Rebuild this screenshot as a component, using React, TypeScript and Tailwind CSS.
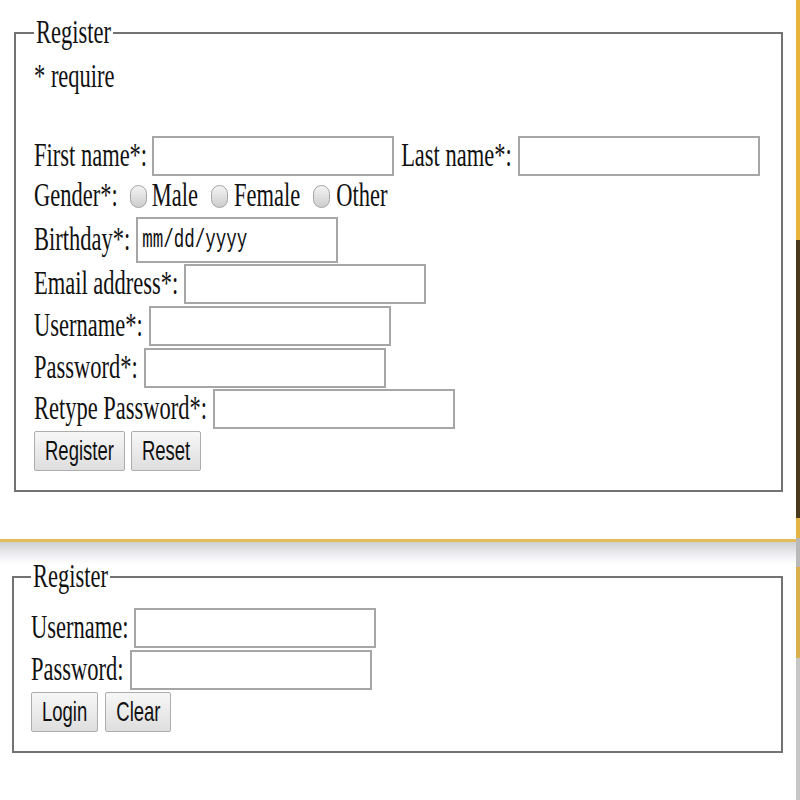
import React from "react";

// text in the reference is stretched vertically, so glyphs get a y-scale
function T({ children, className = "" }: { children: React.ReactNode; className?: string }) {
  return (
    <span className={`inline-block origin-center scale-y-[1.45] whitespace-pre ${className}`}>
      {children}
    </span>
  );
}

function Field({ className = "" }: { className?: string }) {
  return (
    <input
      type="text"
      className={`h-[40px] w-[242px] border-2 border-[#a6a6a6] bg-white outline-none ${className}`}
    />
  );
}

function Radio({ className = "" }: { className?: string }) {
  return (
    <span
      className={`inline-block h-[23px] w-[17px] rounded-full border border-[#a3a3a3] bg-linear-to-b from-[#f4f4f4] to-[#cdcdcd] ${className}`}
    />
  );
}

function Btn({ label, className = "" }: { label: string; className?: string }) {
  return (
    <button
      type="button"
      className={`flex h-[40px] items-center rounded-[2px] border border-[#adadad] bg-linear-to-b from-[#f7f7f7] to-[#dedede] px-[10px] font-['Liberation_Sans',sans-serif] text-[18.5px] leading-[22px] text-[#111] ${className}`}
    >
      <T>{label}</T>
    </button>
  );
}

function Row({ h, children }: { h: string; children: React.ReactNode }) {
  return <div className={`flex items-center ${h}`}>{children}</div>;
}

export default function App() {
  return (
    <div className="flex h-[800px] w-[800px] overflow-hidden bg-white font-['Liberation_Serif',serif] text-[22.5px] leading-[26px] text-[#111]">
      <div className="flex w-[796px] flex-col">
        <div className="h-[539px] pt-[20px]">
          <fieldset className="ml-[14px] w-[769px] border-2 border-[#727272] pb-[19px] pl-[18px] pt-[10px]">
            <legend className="px-[2px]">
              <T>Register</T>
            </legend>
            <Row h="h-[42px]">
              <T>* require</T>
            </Row>
            <div className="mt-[37px] flex h-[41px] items-center">
              <T>First name*:</T>
              <Field className="ml-[5px]" />
              <T className="ml-[7px]">Last name*:</T>
              <Field className="ml-[6px]" />
            </div>
            <Row h="h-[40px]">
              <T>Gender*:</T>
              <Radio className="ml-[12px]" />
              <T className="ml-[5px]">Male</T>
              <Radio className="ml-[13px]" />
              <T className="ml-[6px]">Female</T>
              <Radio className="ml-[13px]" />
              <T className="ml-[6px]">Other</T>
            </Row>
            <Row h="h-[47px]">
              <T>Birthday*:</T>
              <div className="ml-[6px] flex h-[46px] w-[202px] items-center border-2 border-[#a6a6a6] pl-[4px]">
                <T className="font-['Liberation_Mono',monospace] text-[17.5px]">mm/dd/yyyy</T>
              </div>
            </Row>
            <Row h="h-[42px]">
              <T>Email address*:</T>
              <Field className="ml-[6px]" />
            </Row>
            <Row h="h-[42px]">
              <T>Username*:</T>
              <Field className="ml-[6px]" />
            </Row>
            <Row h="h-[41px]">
              <T>Password*:</T>
              <Field className="ml-[6px]" />
            </Row>
            <Row h="h-[42px]">
              <T>Retype Password*:</T>
              <Field className="ml-[6px]" />
            </Row>
            <Row h="h-[41px]">
              <Btn label="Register" />
              <Btn label="Reset" className="ml-[6px]" />
            </Row>
          </fieldset>
        </div>

        <div className="h-[3px] bg-[#e4bd5a]" />
        <div className="h-[22px] bg-linear-to-b from-[#cdd1d0] via-[#ebe9ee] to-white" />

        <fieldset className="ml-[12px] w-[771px] border-2 border-[#727272] pb-[19px] pl-[17px] pt-[17px]">
          <legend className="px-[2px]">
            <T>Register</T>
          </legend>
          <Row h="h-[42px]">
            <T>Username:</T>
            <Field className="ml-[6px]" />
          </Row>
          <Row h="h-[42px]">
            <T>Password:</T>
            <Field className="ml-[6px]" />
          </Row>
          <Row h="h-[41px]">
            <Btn label="Login" />
            <Btn label="Clear" className="ml-[7px]" />
          </Row>
        </fieldset>
      </div>

      <div className="flex w-[4px] flex-col">
        <div className="h-[240px] bg-[#e8b53a]" />
        <div className="h-[278px] bg-[#4a3a1c]" />
        <div className="h-[20px] bg-[#e3b545]" />
        <div className="h-[29px] bg-[#b9b9b9]" />
        <div className="h-[91px] bg-[#d9b04a]" />
        <div className="flex-1 bg-[#c6c6c6]" />
      </div>
    </div>
  );
}
